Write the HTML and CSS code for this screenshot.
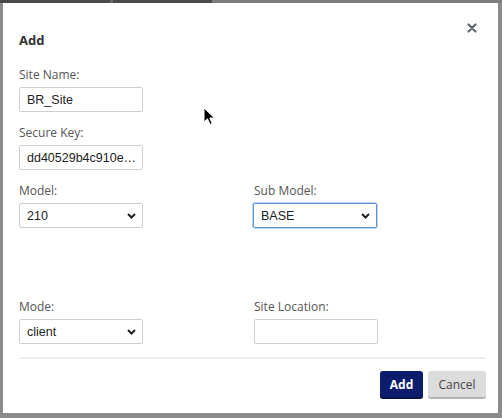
FILE: index.html
```html
<!DOCTYPE html>
<html>
<head>
<meta charset="utf-8">
<link rel="stylesheet" href="styles.css">
</head>
<body>
<div class="modal">
  <div class="header">
    <h1 class="title">Add</h1>
    <svg class="close" width="10" height="10" viewBox="0 0 10 10"><path d="M1.5 1.5 L8.5 8.5 M8.5 1.5 L1.5 8.5" stroke="#5d6670" stroke-width="2.2" stroke-linecap="round"/></svg>
  </div>
  <div class="body">
    <div class="field first">
      <label class="label">Site Name:</label>
      <div class="input">BR_Site</div>
    </div>
    <div class="field gap13">
      <label class="label">Secure Key:</label>
      <div class="input">dd40529b4c910e…</div>
    </div>
    <div class="row gap13">
      <div class="field">
        <label class="label">Model:</label>
        <div class="input select"><span>210</span><svg width="9" height="6" viewBox="0 0 9 6"><path d="M1 1 L4.5 4.5 L8 1" fill="none" stroke="#222" stroke-width="2"/></svg></div>
      </div>
      <div class="field">
        <label class="label">Sub Model:</label>
        <div class="input select focus"><span>BASE</span><svg width="9" height="6" viewBox="0 0 9 6"><path d="M1 1 L4.5 4.5 L8 1" fill="none" stroke="#222" stroke-width="2"/></svg></div>
      </div>
    </div>
    <div class="row gap71">
      <div class="field">
        <label class="label">Mode:</label>
        <div class="input select"><span>client</span><svg width="9" height="6" viewBox="0 0 9 6"><path d="M1 1 L4.5 4.5 L8 1" fill="none" stroke="#222" stroke-width="2"/></svg></div>
      </div>
      <div class="field">
        <label class="label">Site Location:</label>
        <div class="input"></div>
      </div>
    </div>
  </div>
  <div class="footer">
    <button class="btn primary">Add</button>
    <button class="btn secondary">Cancel</button>
  </div>
  <svg class="cursor" width="14" height="20" viewBox="0 0 14 20"><path d="M1 1 L1 15 L4.5 11.8 L7 17.5 L9.2 16.5 L6.8 11 L11.5 11 Z" fill="#000" stroke="#fff" stroke-width="1"/></svg>
</div>
</body>
</html>
```
FILE: styles.css
```css
html, body {
  margin: 0;
  padding: 0;
}
body {
  width: 502px;
  height: 418px;
  overflow: hidden;
  background:
    linear-gradient(to right, #4a4a4a 0 110px, #6a6a6a 110px 113px, #4a4a4a 113px 212px, #7d7d7d 212px) top left / 100% 3px no-repeat,
    #8b8b8b;
  font-family: "Open Sans", "DejaVu Sans", sans-serif;
  color: #555;
}
.modal {
  position: relative;
  box-sizing: border-box;
  margin: 3px 4px 0 3px;
  height: 410px;
  background: #fff;
  padding: 28px 12px 0 16px;
  display: flex;
  flex-direction: column;
}
.header {
  display: flex;
  justify-content: space-between;
  align-items: flex-start;
}
.title {
  margin: 0;
  font-size: 13px;
  line-height: 18px;
  font-weight: 700;
  color: #333;
}
.close {
  margin-top: -8px;
  margin-right: 9px;
}
.body {
  display: flex;
  flex-direction: column;
}
.field {
  display: flex;
  flex-direction: column;
  width: 124px;
}
.first { margin-top: 18px; }
.gap13 { margin-top: 13px; }
.gap71 { margin-top: 71px; }
.row {
  display: grid;
  grid-template-columns: 235px 124px;
}
.label {
  font-size: 12px;
  line-height: 16px;
  color: #555;
  margin-bottom: 4px;
}
.input {
  box-sizing: border-box;
  height: 25px;
  width: 124px;
  border: 1px solid #cfcfcf;
  border-radius: 2px;
  padding: 0 7px;
  font-family: "Liberation Sans", Arial, sans-serif;
  font-size: 12.5px;
  color: #222;
  display: flex;
  align-items: center;
  white-space: nowrap;
  overflow: hidden;
}
.select {
  justify-content: space-between;
  padding-right: 6px;
}
.focus {
  border-color: #5b93cf;
  box-shadow: 0 0 0 1px #bcd5ee;
  width: 124px;
  margin-left: -1px;
}
.footer {
  margin-top: 13px;
  border-top: 2px solid #efefef;
  padding-top: 12px;
  display: flex;
  justify-content: flex-end;
  gap: 5px;
}
.btn {
  box-sizing: border-box;
  height: 28px;
  border: none;
  border-radius: 3px;
  font-family: "Open Sans", "DejaVu Sans", sans-serif;
  font-size: 12px;
  padding: 0 8px;
}
.primary {
  width: 43px;
  background: #0c1d6e;
  color: #fff;
  font-weight: 700;
  border-bottom: 2px solid #071247;
}
.secondary {
  width: 58px;
  background: #dcdcdc;
  color: #444;
  border-bottom: 2px solid #b3b3b3;
}
.cursor {
  position: absolute;
  left: 200px;
  top: 104px;
}
```
